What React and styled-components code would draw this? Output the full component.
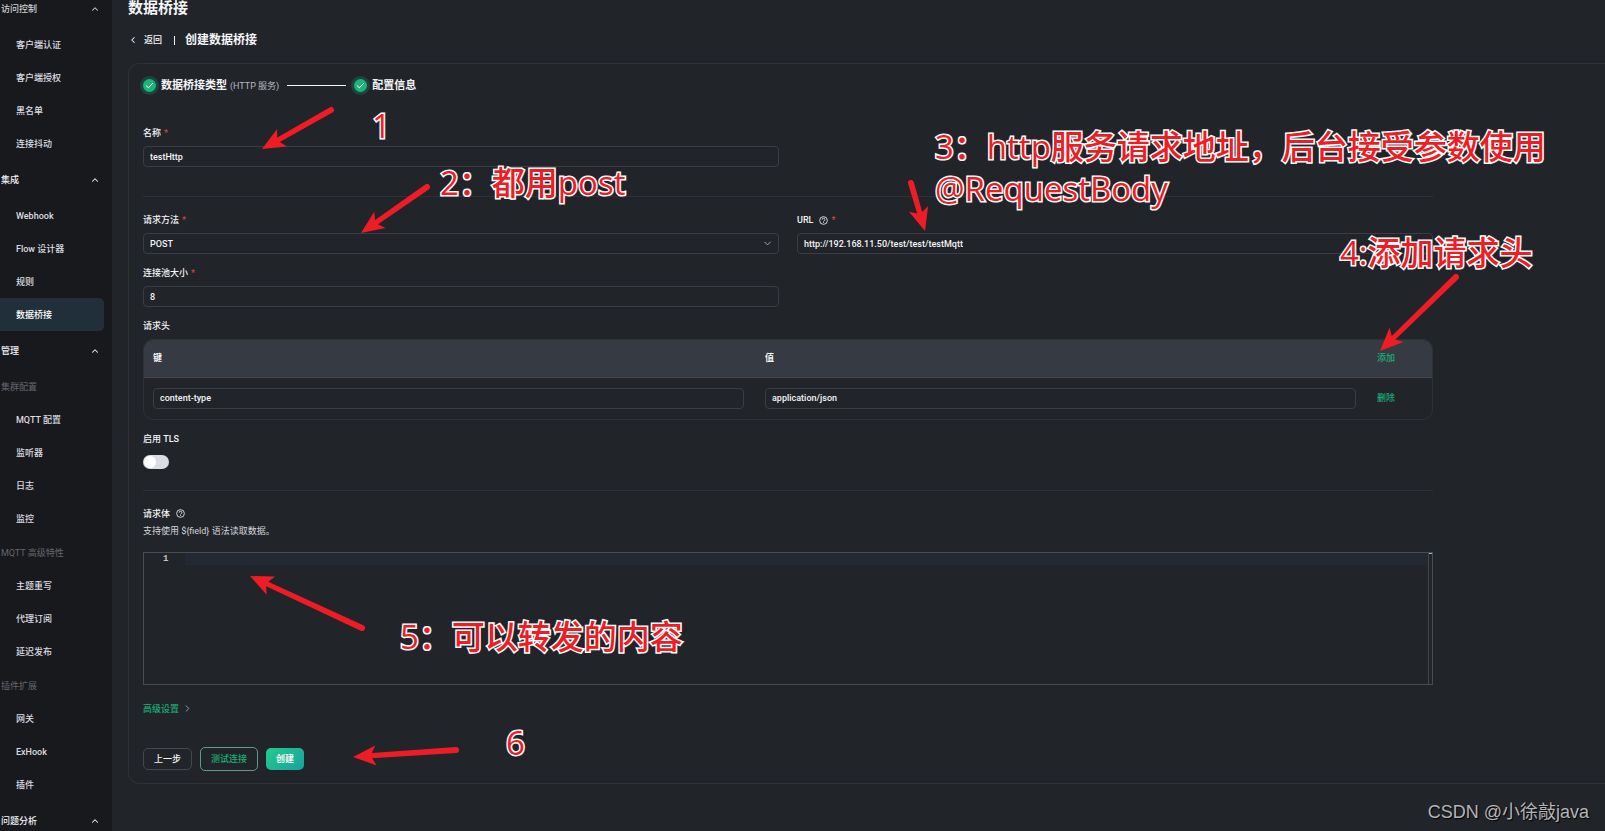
import React, { useState } from "react";
import styled, { createGlobalStyle } from "styled-components";
import { ChevronUp, ChevronDown, ChevronLeft, ChevronRight } from "lucide-react";

const GlobalStyle = createGlobalStyle`
  * {
    box-sizing: border-box;
  }
  body {
    margin: 0;
    background: #212429;
    color: #f4f5f7;
    font-family: Roboto, "Noto Sans CJK SC", sans-serif;
    font-size: 9px;
    line-height: 16px;
  }
  input, select, textarea, button {
    font: inherit;
    color: inherit;
  }
`;

const Layout = styled.div`
  position: relative;
  display: flex;
  height: 100vh;
  min-height: 831px;
  overflow: hidden;
`;

const Sidebar = styled.aside`
  flex: none;
  width: 112px;
  overflow: hidden;
  background: #18191d;
`;

const Menu = styled.nav`
  margin-top: -10px;
`;

const Section = styled.section`
  padding-bottom: 1px;
`;

const SectionTitle = styled.button`
  display: flex;
  align-items: center;
  justify-content: space-between;
  width: 100%;
  height: 38px;
  padding: 0 12px 0 1px;
  border: 0;
  background: none;
  font-weight: 500;
  color: ${(props) => (props.$muted ? "#cfd0d3" : "#f4f5f7")};
`;

const Group = styled.div`
  & + & {
    margin-top: 1px;
  }
`;

const GroupTitle = styled.div`
  padding: 2px 0 0 1px;
  line-height: 31px;
  color: #64666b;
`;

const MenuItem = styled.a`
  display: block;
  width: 104px;
  padding: 2px 0 0 16px;
  border-radius: 0 5px 5px 0;
  line-height: 31px;
  font-weight: 500;
  text-decoration: none;
  color: ${(props) => (props.$active ? "#ffffff" : "#dcdde0")};
  background: ${(props) => (props.$active ? "#212f3b" : "none")};
`;

const Main = styled.main`
  flex: 1;
  min-width: 0;
  padding-left: 16px;
`;

const PageTitle = styled.h1`
  margin: 0;
  font-size: 15px;
  line-height: 16px;
  font-weight: 700;
`;

const Crumb = styled.div`
  display: flex;
  align-items: center;
  height: 16px;
  margin: 16px 0 15px;
`;

const BackLink = styled.a`
  display: flex;
  align-items: center;
  gap: 6px;
  color: inherit;
  font-weight: 500;
  text-decoration: none;
`;

const CrumbBar = styled.span`
  width: 1px;
  height: 9px;
  margin: 0 10px 0 12px;
  background: #f4f5f7;
`;

const CrumbTitle = styled.h2`
  margin: 0;
  font-size: 12px;
  line-height: 16px;
  font-weight: 700;
`;

const Card = styled.form`
  padding: 12px 172px 12px 14px;
  border: 1px solid #2e3137;
  border-right: 0;
  border-radius: 11px 0 0 11px;
`;

const Steps = styled.div`
  display: flex;
  align-items: center;
  height: 18px;
`;

const StepMark = styled.span`
  display: flex;
  align-items: center;
  justify-content: center;
  width: 13px;
  height: 13px;
  margin-right: 5px;
  border-radius: 50%;
  background: #1bb47a;
  box-shadow: 0 0 0 3px #20433b;
`;

const StepTitle = styled.span`
  padding-top: 2px;
  font-size: 11px;
  font-weight: 700;
`;

const StepNote = styled.span`
  margin-left: 3px;
  padding-top: 2px;
  color: #b8babf;
`;

const StepLine = styled.span`
  width: 59px;
  height: 1px;
  margin: 0 8px;
  background: #f4f5f7;
`;

const Columns = styled.div`
  display: grid;
  grid-template-columns: 1fr 1fr;
  gap: 11px 18px;
`;

const Block = styled.div`
  margin-top: ${(props) => props.$top}px;
`;

const Field = styled.div`
  display: flex;
  flex-direction: column;
  gap: 5px;
`;

const Label = styled.label`
  display: flex;
  align-items: center;
  height: 16px;
  font-weight: 500;
`;

const Required = styled.span`
  margin-left: 3px;
  color: #d8433f;
`;

const HelpMark = styled.svg`
  width: 9px;
  height: 9px;
  margin-left: 6px;
`;

const Input = styled.input`
  display: block;
  width: 100%;
  height: 21px;
  padding: 0 6px;
  border: 1px solid #3a3d43;
  border-radius: 4px;
  background: transparent;
  font-weight: 500;
`;

const SelectBox = styled.div`
  position: relative;
  svg {
    position: absolute;
    top: 5px;
    right: 6px;
    color: #b3b5ba;
    pointer-events: none;
  }
`;

const Select = styled(Input)`
  appearance: none;
`;

const Divider = styled.hr`
  height: 1px;
  margin: ${(props) => props.$space};
  border: 0;
  background: #2e3137;
`;

const TableFrame = styled.div`
  overflow: hidden;
  border: 1px solid #2e3137;
  border-radius: 10px;
`;

const Table = styled.table`
  width: 100%;
  table-layout: fixed;
  border-collapse: collapse;
  th {
    height: 37px;
    padding: 0 9px;
    border-bottom: 1px solid #44474e;
    background: #363a42;
    text-align: left;
    font-weight: 700;
  }
  td {
    padding: 10px 12px 10px 9px;
  }
  th:last-child,
  td:last-child {
    width: 64px;
  }
`;

const TextButton = styled.button`
  display: inline-flex;
  align-items: center;
  gap: 3px;
  padding: 0;
  border: 0;
  background: none;
  font-weight: 500;
  color: #1aae75;
  svg {
    color: #a3a5aa;
  }
`;

const Switch = styled.input`
  appearance: none;
  display: block;
  width: 26px;
  height: 14px;
  margin: 3px 0 0;
  padding: 1px;
  border-radius: 7px;
  background: ${(props) => (props.checked ? "#1bb47a" : "#dadce3")};
  &::before {
    content: "";
    display: block;
    width: 12px;
    height: 12px;
    margin-left: ${(props) => (props.checked ? 12 : 0)}px;
    border-radius: 50%;
    background: #ffffff;
  }
`;

const Hint = styled.p`
  margin: 1px 0 13px;
  color: #d5d6d9;
`;

const Editor = styled.div`
  display: flex;
  height: 133px;
  border: 1px solid #4a4d50;
`;

const Gutter = styled.div`
  width: 41px;
  padding-left: 19px;
  line-height: 13px;
  font-family: "Liberation Mono", monospace;
  font-weight: 700;
  color: #c6c6c6;
`;

const Code = styled.textarea`
  flex: 1;
  padding: 0;
  border: 0;
  outline: 0;
  resize: none;
  line-height: 13px;
  font-family: "Liberation Mono", monospace;
  background: linear-gradient(#222932, #222932) top / 100% 12px no-repeat;
`;

const Ruler = styled.div`
  width: 4px;
  border-left: 1px solid #44474a;
  background: linear-gradient(#b5b5b5, #b5b5b5) top / 100% 1px no-repeat;
`;

const Actions = styled.div`
  display: flex;
  align-items: center;
  gap: 8px;
  margin-top: 30px;
`;

const Button = styled.button`
  height: 22px;
  padding: 0 10px;
  border: 1px solid #44474d;
  border-radius: 5px;
  background: none;
  font-weight: 500;
  line-height: 16px;
`;

const OutlineButton = styled(Button)`
  height: 24px;
  border-color: #5c9c8b;
  color: #1aae75;
`;

const PrimaryButton = styled(Button)`
  border: 0;
  background: linear-gradient(135deg, #23cb8b, #17a2a0);
  font-weight: 700;
`;

/* Notes drawn over the page */
const Arrows = styled.svg`
  position: absolute;
  top: 0;
  left: 0;
  pointer-events: none;
`;

const Note = styled.div`
  position: absolute;
  left: ${(props) => props.$x}px;
  top: ${(props) => props.$y}px;
  font-family: "Open Sans", "Noto Sans CJK SC", sans-serif;
  font-size: 33px;
  line-height: 42px;
  font-weight: 500;
  white-space: pre;
  color: #ee1c24;
  -webkit-text-stroke: 3px #ffffff;
  paint-order: stroke fill;
  pointer-events: none;
`;

const Watermark = styled.div`
  position: absolute;
  right: 16px;
  bottom: 7px;
  font-family: "Liberation Sans", "Noto Sans CJK SC", sans-serif;
  font-size: 18px;
  line-height: 24px;
  color: #b4b5b7;
  text-shadow: 1px 1px 1px #000000;
`;

const managementGroups = [
  { title: "集群配置", items: ["MQTT 配置", "监听器", "日志", "监控"] },
  { title: "MQTT 高级特性", items: ["主题重写", "代理订阅", "延迟发布"] },
  { title: "插件扩展", items: ["网关", "ExHook", "插件"] },
];

const arrows = [
  { tip: [262, 149], tail: [331, 110] },
  { tip: [361, 233], tail: [427, 187] },
  { tip: [925, 231], tail: [911, 183] },
  { tip: [1380, 351], tail: [1456, 277] },
  { tip: [250, 576], tail: [362, 628] },
  { tip: [353, 757], tail: [456, 750] },
];

const notes = [
  { x: 372, y: 105, text: "1" },
  { x: 440, y: 162, text: "2：都用post" },
  { x: 935, y: 126, text: "3：http服务请求地址，后台接受参数使用\n@RequestBody" },
  { x: 1340, y: 232, text: "4:添加请求头" },
  { x: 400, y: 616, text: "5：可以转发的内容" },
  { x: 506, y: 722, text: "6" },
];

const Arrow = ({ tip, tail }) => {
  const dx = tail[0] - tip[0];
  const dy = tail[1] - tip[1];
  const length = Math.hypot(dx, dy);
  const angle = (Math.atan2(dy, dx) * 180) / Math.PI;
  return (
    <g transform={`translate(${tip[0]} ${tip[1]}) rotate(${angle})`}>
      <path
        d={`M0 0 L23 -10 L19 -2.6 L${length} -3 a3 3 0 0 1 0 6 L19 2.6 L23 10 Z`}
        fill="#ee1c24"
      />
    </g>
  );
};

const Help = () => (
  <HelpMark viewBox="0 0 20 20" fill="none" stroke="#e4e5e8" strokeWidth="2">
    <circle cx="10" cy="10" r="8.6" />
    <path d="M7 8a3 3 0 1 1 3.6 2.9c-.5.2-.6.5-.6 1.3M10 13.6v1.8" />
  </HelpMark>
);

const DoneMark = () => (
  <StepMark>
    <svg width="9" height="9" viewBox="0 0 9 9" fill="none" stroke="#fff">
      <path d="M1 4.6 3.4 6.8 8 2" />
    </svg>
  </StepMark>
);

const Items = ({ items, active }) =>
  items.map((item) => (
    <MenuItem href="#" key={item} $active={item === active}>
      {item}
    </MenuItem>
  ));

const SectionHead = ({ children, muted }) => (
  <SectionTitle type="button" $muted={muted}>
    {children}
    <ChevronUp size={10} strokeWidth={2.5} />
  </SectionTitle>
);

const App = () => {
  const [tls, setTls] = useState(false);
  return (
    <>
      <GlobalStyle />
      <Layout>
        <Sidebar>
          <Menu>
            <Section>
              <SectionHead muted>访问控制</SectionHead>
              <Items items={["客户端认证", "客户端授权", "黑名单", "连接抖动"]} />
            </Section>
            <Section>
              <SectionHead>集成</SectionHead>
              <Items
                items={["Webhook", "Flow 设计器", "规则", "数据桥接"]}
                active="数据桥接"
              />
            </Section>
            <Section>
              <SectionHead>管理</SectionHead>
              {managementGroups.map((group) => (
                <Group key={group.title}>
                  <GroupTitle>{group.title}</GroupTitle>
                  <Items items={group.items} />
                </Group>
              ))}
            </Section>
            <SectionHead>问题分析</SectionHead>
          </Menu>
        </Sidebar>

        <Main>
          <PageTitle>数据桥接</PageTitle>
          <Crumb>
            <BackLink href="#">
              <ChevronLeft size={10} strokeWidth={2.5} />
              返回
            </BackLink>
            <CrumbBar />
            <CrumbTitle>创建数据桥接</CrumbTitle>
          </Crumb>

          <Card onSubmit={(e) => e.preventDefault()}>
            <Steps>
              <DoneMark />
              <StepTitle>数据桥接类型</StepTitle>
              <StepNote>(HTTP 服务)</StepNote>
              <StepLine />
              <DoneMark />
              <StepTitle>配置信息</StepTitle>
            </Steps>

            <Block $top={31}>
              <Columns>
                <Field>
                  <Label htmlFor="name">
                    名称<Required>*</Required>
                  </Label>
                  <Input id="name" defaultValue="testHttp" />
                </Field>
              </Columns>
            </Block>

            <Divider $space="29px 0 15px" />

            <Columns>
              <Field>
                <Label htmlFor="method">
                  请求方法<Required>*</Required>
                </Label>
                <SelectBox>
                  <Select as="select" id="method" defaultValue="POST">
                    <option>POST</option>
                    <option>GET</option>
                    <option>PUT</option>
                    <option>DELETE</option>
                  </Select>
                  <ChevronDown size={11} />
                </SelectBox>
              </Field>
              <Field>
                <Label htmlFor="url">
                  URL
                  <Help />
                  <Required>*</Required>
                </Label>
                <Input
                  id="url"
                  defaultValue="http://192.168.11.50/test/test/testMqtt"
                />
              </Field>
              <Field>
                <Label htmlFor="pool">
                  连接池大小<Required>*</Required>
                </Label>
                <Input id="pool" defaultValue="8" />
              </Field>
            </Columns>

            <Block $top={11}>
              <Field>
                <Label as="div">请求头</Label>
                <TableFrame>
                  <Table>
                    <thead>
                      <tr>
                        <th>键</th>
                        <th>值</th>
                        <th>
                          <TextButton type="button">添加</TextButton>
                        </th>
                      </tr>
                    </thead>
                    <tbody>
                      <tr>
                        <td>
                          <Input aria-label="键" defaultValue="content-type" />
                        </td>
                        <td>
                          <Input aria-label="值" defaultValue="application/json" />
                        </td>
                        <td>
                          <TextButton type="button">删除</TextButton>
                        </td>
                      </tr>
                    </tbody>
                  </Table>
                </TableFrame>
              </Field>
            </Block>

            <Block $top={11}>
              <Field>
                <Label htmlFor="tls">启用 TLS</Label>
                <Switch
                  id="tls"
                  type="checkbox"
                  checked={tls}
                  onChange={() => setTls(!tls)}
                />
              </Field>
            </Block>

            <Divider $space="21px 0 15px" />

            <Label htmlFor="body">
              请求体
              <Help />
            </Label>
            <Hint>支持使用 {"${field}"} 语法读取数据。</Hint>
            <Editor>
              <Gutter>1</Gutter>
              <Code id="body" spellCheck={false} />
              <Ruler />
            </Editor>

            <Block $top={16}>
              <TextButton type="button">
                高级设置
                <ChevronRight size={11} />
              </TextButton>
            </Block>

            <Actions>
              <Button type="button">上一步</Button>
              <OutlineButton type="button">测试连接</OutlineButton>
              <PrimaryButton type="submit">创建</PrimaryButton>
            </Actions>
          </Card>
        </Main>

        <Arrows width="100%" height="100%">
          {arrows.map((arrow) => (
            <Arrow key={arrow.tip.join()} {...arrow} />
          ))}
        </Arrows>
        {notes.map((note) => (
          <Note key={note.text} $x={note.x} $y={note.y}>
            {note.text}
          </Note>
        ))}
        <Watermark>CSDN @小徐敲java</Watermark>
      </Layout>
    </>
  );
};

export default App;
